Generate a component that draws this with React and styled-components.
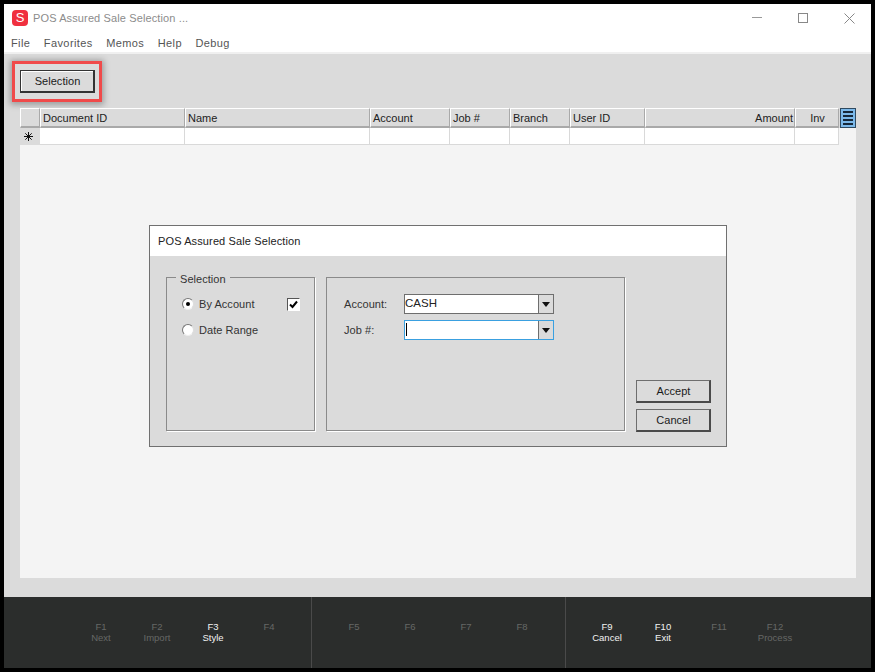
import styled, { createGlobalStyle } from "styled-components";

const Global = createGlobalStyle`
  html, body { margin: 0; padding: 0; background: #000; }
  body { font-family: "Liberation Sans", Arial, sans-serif; font-size: 11px; letter-spacing: 0.05px; color: #1a1a1a; }
  * { box-sizing: border-box; }
`;

const Win = styled.div`
  margin: 4px;
  width: 867px;
  height: 664px;
  display: flex;
  flex-direction: column;
  background: #dbdbdb;
  overflow: hidden;
`;

const TitleBar = styled.div`
  height: 30px;
  margin-right: -1px;
  background: #fff;
  display: flex;
  align-items: center;
  padding: 0 0 2px 8px;
`;

const Logo = styled.div`
  width: 16px;
  height: 16px;
  border-radius: 4px;
  background: #f0303f;
  color: #fff;
  font-size: 13px;
  line-height: 16px;
  text-align: center;
  margin-right: 5px;
`;

const TitleText = styled.div`
  flex: 1;
  font-size: 11px;
  letter-spacing: 0.12px;
  color: #8c8c8c;
`;

const WinBtn = styled.div`
  width: 46px;
  height: 28px;
  display: flex;
  align-items: center;
  justify-content: center;
`;

const MenuBar = styled.div`
  height: 20px;
  background: #fff;
  display: flex;
  align-items: center;
  gap: 13.5px;
  padding: 0 0 1px 7px;
  border-bottom: 2px solid #f0f0f0;
`;

const MenuItem = styled.span`
  color: #555;
  font-size: 11px;
  letter-spacing: 0.4px;
`;

const Toolbar = styled.div`
  height: 54px;
  padding: 7px 0 0 8px;
  flex: none;
`;

const Highlight = styled.div`
  width: 90px;
  height: 41px;
  border: 3px solid #f04a4a;
  box-shadow: 0 1px 6px 2px rgba(0, 0, 0, 0.28);
  padding: 6px 0 0 5px;
`;

const Btn = styled.button`
  display: block;
  width: 75px;
  height: 23px;
  padding: 0 0 0 1px;
  background: #dbdbdb;
  border: 1px solid #6e6e6e;
  border-right: 2px solid #4a4a4a;
  border-bottom: 2px solid #4a4a4a;
  font-family: inherit;
  font-size: 11px;
  letter-spacing: 0.05px;
  color: #1a1a1a;
`;

const ToolBtn = styled(Btn)`
  box-shadow: inset 1px 1px 0 #fff;
  border-color: #333;
`;

const Content = styled.div`
  position: relative;
  margin: 0 15px 0 16px;
  height: 470px;
  background: #f4f4f4;
  flex: none;
`;

const GridRow = styled.div`
  display: flex;
  height: 20px;
  background: #dbdbdb;
`;

const HeadCell = styled.div`
  width: ${(p) => p.$w}px;
  flex: none;
  height: 20px;
  padding: 2px 1px 0 2px;
  line-height: 15px;
  letter-spacing: 0;
  color: #222;
  text-align: ${(p) => p.$align || "left"};
  border-top: 1px solid #fff;
  border-left: 1px solid #fff;
  border-right: 1px solid #a9a9a9;
  border-bottom: 2px solid #a9a9a9;
`;

const ColumnBtn = styled.div`
  width: 16px;
  height: 20px;
  margin-left: 1px;
  background: #7cb9ea;
  border: 1px solid #2f4a60;
  display: flex;
  flex-direction: column;
  justify-content: center;
  gap: 2px;
  padding: 0 2px;
`;

const ColumnBar = styled.div`
  height: 2px;
  background: #16283a;
`;

const DataRow = styled.div`
  display: flex;
  height: 17px;
`;

const DataCell = styled.div`
  width: ${(p) => p.$w}px;
  flex: none;
  background: #fff;
  border-right: 1px solid #d9d9d9;
  border-bottom: 1px solid #d9d9d9;
`;

const RowHead = styled.div`
  width: 20px;
  flex: none;
  background: #dbdbdb;
  display: flex;
  align-items: center;
  justify-content: center;
  padding-right: 3px;
`;

const Dialog = styled.div`
  position: absolute;
  left: 129px;
  top: 117px;
  width: 578px;
  height: 222px;
  background: #dbdbdb;
  border: 1px solid #707070;
  display: flex;
  flex-direction: column;
`;

const DialogTitle = styled.div`
  height: 30px;
  background: #fff;
  line-height: 30px;
  padding-left: 8px;
  letter-spacing: 0.12px;
  color: #222;
`;

const DialogBody = styled.div`
  display: flex;
  padding: 21px 0 0 16px;
`;

const Group = styled.div`
  position: relative;
  width: ${(p) => p.$w}px;
  height: 154px;
  margin-right: ${(p) => p.$mr || 0}px;
  border: 1px solid #8a8a8a;
  box-shadow: 1px 1px 0 #fff;
`;

const GroupLabel = styled.span`
  position: absolute;
  top: -6px;
  left: 9px;
  padding: 0 4px;
  background: #dbdbdb;
  line-height: 14px;
  color: #333;
`;

const RadioRow = styled.div`
  position: absolute;
  left: 15px;
  top: ${(p) => p.$top}px;
  display: flex;
  align-items: center;
  height: 16px;
  color: #333;
`;

const Radio = styled.span`
  width: 12px;
  height: 12px;
  margin-right: 5px;
  border-radius: 50%;
  background: #fff;
  border: 1px solid;
  border-color: #777 #ddd #eee #777;
  display: flex;
  align-items: center;
  justify-content: center;
  &::after {
    content: "";
    width: 4px;
    height: 4px;
    border-radius: 50%;
    background: ${(p) => (p.$on ? "#000" : "transparent")};
  }
`;

const Check = styled.div`
  position: absolute;
  left: 120px;
  top: 20px;
  width: 13px;
  height: 13px;
  background: #fff;
  border: 1px solid #fff;
  border-top-color: #555;
  border-left-color: #555;
  display: flex;
  align-items: center;
  justify-content: center;
`;

const FieldRow = styled.div`
  position: absolute;
  left: 17px;
  top: ${(p) => p.$top}px;
  display: flex;
  align-items: center;
  height: 20px;
`;

const FieldLabel = styled.span`
  width: 60px;
  color: #333;
`;

const Combo = styled.div`
  width: 150px;
  height: 20px;
  display: flex;
  background: #fff;
  border: 1px solid ${(p) => (p.$focus ? "#3aa0e0" : "#6e6e6e")};
`;

const ComboText = styled.div`
  flex: 1;
  line-height: 17px;
  color: #222;
  font-size: 11.5px;
`;

const Caret = styled.div`
  width: 1px;
  height: 13px;
  margin: 2px 0 0 1px;
  background: #000;
`;

const ComboArrow = styled.div`
  width: 15px;
  background: #dbdbdb;
  border-left: 1px solid #6e6e6e;
  display: flex;
  align-items: center;
  justify-content: center;
  &::after {
    content: "";
    border-top: 5px solid #111;
    border-left: 4px solid transparent;
    border-right: 4px solid transparent;
  }
`;

const Actions = styled.div`
  position: absolute;
  left: 486px;
  top: 154px;
  display: flex;
  flex-direction: column;
  gap: 6px;
`;

const Spacer = styled.div`
  height: 19px;
  flex: none;
`;

const Footer = styled.div`
  height: 71px;
  flex: none;
  background: #2b2d2c;
  display: flex;
`;

const KeyGroup = styled.div`
  display: flex;
  width: ${(p) => p.$w}px;
  padding-left: ${(p) => p.$pl}px;
  border-right: ${(p) => (p.$last ? "none" : "1px solid #4a4a4a")};
`;

const Key = styled.div`
  width: 56px;
  padding-top: 25px;
  text-align: center;
  font-size: 9.5px;
  line-height: 10.5px;
  letter-spacing: 0;
  color: ${(p) => (p.$on ? "#f2f2f2" : "#666866")};
`;

const columns = [
  ["Document ID", 145],
  ["Name", 185],
  ["Account", 80],
  ["Job #", 60],
  ["Branch", 60],
  ["User ID", 75],
  ["Amount", 150, "right"],
  ["Inv", 44, "center"],
];

const keyGroups = [
  { w: 308, pl: 69, keys: [["F1", "Next"], ["F2", "Import"], ["F3", "Style", 1], ["F4"]] },
  { w: 254, pl: 14, keys: [["F5"], ["F6"], ["F7"], ["F8"]] },
  { w: 305, pl: 13, last: true, keys: [["F9", "Cancel", 1], ["F10", "Exit", 1], ["F11"], ["F12", "Process"]] },
];

const Star = () => (
  <svg width="9" height="9" viewBox="0 0 9 9" stroke="#111" strokeWidth="1">
    <path d="M4.5 0v9M0 4.5h9M1.3 1.3l6.4 6.4M7.7 1.3L1.3 7.7" />
  </svg>
);

export default function App() {
  return (
    <>
      <Global />
      <Win>
        <TitleBar>
          <Logo>S</Logo>
          <TitleText>POS Assured Sale Selection ...</TitleText>
          <WinBtn>
            <svg width="10" height="10" stroke="#999"><path d="M0 4.5h10" /></svg>
          </WinBtn>
          <WinBtn>
            <svg width="10" height="10" stroke="#888" fill="none"><rect x=".5" y=".5" width="9" height="9" /></svg>
          </WinBtn>
          <WinBtn>
            <svg width="11" height="11" stroke="#888"><path d="M.5.5l10 10M10.5.5l-10 10" /></svg>
          </WinBtn>
        </TitleBar>
        <MenuBar>
          {["File", "Favorites", "Memos", "Help", "Debug"].map((m) => (
            <MenuItem key={m}>{m}</MenuItem>
          ))}
        </MenuBar>
        <Toolbar>
          <Highlight>
            <ToolBtn>Selection</ToolBtn>
          </Highlight>
        </Toolbar>
        <Content>
          <GridRow>
            <HeadCell $w={20} />
            {columns.map(([name, w, align]) => (
              <HeadCell key={name} $w={w} $align={align}>{name}</HeadCell>
            ))}
            <ColumnBtn>
              <ColumnBar />
              <ColumnBar />
              <ColumnBar />
              <ColumnBar />
            </ColumnBtn>
          </GridRow>
          <DataRow>
            <RowHead><Star /></RowHead>
            {columns.map(([name, w]) => (
              <DataCell key={name} $w={w} />
            ))}
          </DataRow>
          <Dialog>
            <DialogTitle>POS Assured Sale Selection</DialogTitle>
            <DialogBody>
              <Group $w={149} $mr={11}>
                <GroupLabel>Selection</GroupLabel>
                <RadioRow $top={18}><Radio $on />By Account</RadioRow>
                <Check>
                  <svg width="9" height="9" stroke="#000" strokeWidth="2" fill="none">
                    <path d="M1 4.5l2.5 2.5L8 1.5" />
                  </svg>
                </Check>
                <RadioRow $top={44}><Radio />Date Range</RadioRow>
              </Group>
              <Group $w={299}>
                <FieldRow $top={16}>
                  <FieldLabel>Account:</FieldLabel>
                  <Combo><ComboText>CASH</ComboText><ComboArrow /></Combo>
                </FieldRow>
                <FieldRow $top={42}>
                  <FieldLabel>Job #:</FieldLabel>
                  <Combo $focus><ComboText><Caret /></ComboText><ComboArrow /></Combo>
                </FieldRow>
              </Group>
              <Actions>
                <Btn>Accept</Btn>
                <Btn>Cancel</Btn>
              </Actions>
            </DialogBody>
          </Dialog>
        </Content>
        <Spacer />
        <Footer>
          {keyGroups.map((g) => (
            <KeyGroup key={g.keys[0][0]} $w={g.w} $pl={g.pl} $last={g.last}>
              {g.keys.map(([k, label, on]) => (
                <Key key={k} $on={on}>{k}<br />{label}</Key>
              ))}
            </KeyGroup>
          ))}
        </Footer>
      </Win>
    </>
  );
}
